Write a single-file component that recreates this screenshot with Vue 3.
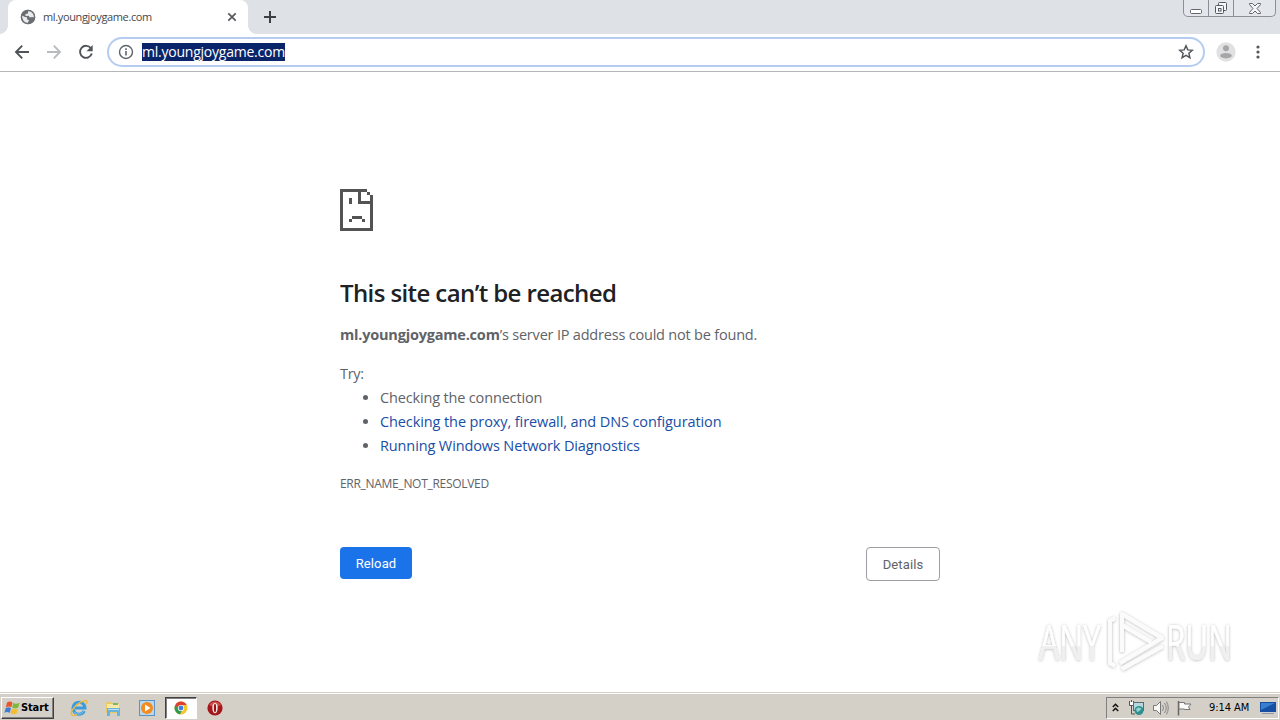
<script setup>
const suggestions = [
  { text: 'Checking the connection', cls: 's1' },
  { text: 'Checking the proxy, firewall, and DNS configuration', cls: 's2 link' },
  { text: 'Running Windows Network Diagnostics', cls: 's3 link' },
]
</script>

<template>
  <div class="screen">
    <header class="tabstrip">
      <div class="tab">
        <svg class="globe" width="16" height="16" viewBox="0 0 16 16">
          <circle cx="8" cy="8" r="7.2" fill="#6b6e72" />
          <path d="M2 6.500 5 8l2 .3v2l2 1-1.500 3C4 14 1.700 10.500 2 6.500ZM8 2.200l3-.2 3 3.500.3 3-2.300-.5-2 .6-1.500-1.800-3 .2L5.500 5 8 4.600Z" fill="#e9eaeb" />
          <circle cx="8" cy="8" r="6.600" fill="none" stroke="#6b6e72" stroke-width="1.400" />
        </svg>
        <span class="tab-title">ml.youngjoygame.com</span>
        <svg class="tab-close" width="10" height="10" viewBox="0 0 10 10"><path d="m1.300 1.300 7.400 7.400m0-7.400L1.300 8.700" stroke="#55585c" stroke-width="1.700" /></svg>
      </div>
      <svg class="plus" width="14" height="14" viewBox="0 0 14 14"><path d="M7 1v12M1 7h12" stroke="#3c4043" stroke-width="2" /></svg>
      <div class="window-buttons">
        <span class="wb"><svg width="14" height="14" viewBox="0 0 14 14"><rect x="1.500" y="8.500" width="11" height="4" rx="1" fill="#fff" stroke="#62666d" /></svg></span>
        <span class="wb mid"><svg width="14" height="14" viewBox="0 0 14 14"><rect x="4.500" y="1.500" width="8" height="8" rx="1" fill="#f5f6f8" stroke="#555960" /><rect x="1.500" y="4.500" width="8" height="8" rx="1" fill="#f5f6f8" stroke="#555960" /><rect x="4.500" y="7.500" width="2.500" height="2.500" fill="#fff" stroke="#555960" /></svg></span>
        <span class="wb last"><svg width="14" height="14" viewBox="0 0 14 14"><path d="M1.500 2.500h3L7 5l2.500-2.500h3v1L9 7.500l3.500 4v1h-3L7 10l-2.500 2.500h-3v-1l3.500-4-3.500-4Z" fill="#f5f6f8" stroke="#62666d" /></svg></span>
      </div>
    </header>

    <div class="toolbar">
      <svg class="nav" width="16" height="16" viewBox="0 0 16 16"><path d="M15 8H2.500M8.200 1.700 2 8l6.200 6.300" fill="none" stroke="#505357" stroke-width="1.900" /></svg>
      <svg class="nav" width="16" height="16" viewBox="0 0 16 16"><path d="M1 8h12.500M7.800 1.700 14 8l-6.200 6.300" fill="none" stroke="#b9bbbe" stroke-width="1.900" /></svg>
      <svg class="nav" width="16" height="16" viewBox="0 0 16 16"><path d="M12.900 4.300A6 6 0 1 0 13.800 9.500" fill="none" stroke="#505357" stroke-width="1.900" /><path d="M14.700 1v6.200H8.500Z" fill="#505357" /></svg>
      <div class="omnibox">
        <svg class="info" width="16" height="16" viewBox="0 0 16 16"><circle cx="8" cy="8" r="6.500" fill="none" stroke="#5f6368" stroke-width="1.400" /><path d="M8 7v4.600M8 4.300V6" stroke="#5f6368" stroke-width="1.600" /></svg>
        <span class="url">ml.youngjoygame.com</span>
        <svg class="star" width="16" height="16" viewBox="0 0 16 16"><path d="m8 1.800 1.800 4.100 4.500.4-3.400 3 1 4.400L8 11.400l-3.900 2.300 1-4.400-3.400-3 4.500-.4Z" fill="none" stroke="#53575b" stroke-width="1.500" /></svg>
      </div>
      <svg class="avatar" width="20" height="20" viewBox="0 0 20 20"><circle cx="10" cy="10" r="9.700" fill="#e1e1e2" /><circle cx="10" cy="6.200" r="3" fill="#a5a6a8" /><ellipse cx="10" cy="13.700" rx="5.800" ry="2.700" fill="#a5a6a8" /></svg>
      <svg class="dots" width="4" height="16" viewBox="0 0 4 16"><g fill="#55585c"><circle cx="2" cy="3" r="1.600" /><circle cx="2" cy="8" r="1.600" /><circle cx="2" cy="13" r="1.600" /></g></svg>
    </div>

    <main class="page">
      <div class="error">
        <svg class="sad" width="33" height="42" viewBox="0 0 33 42" shape-rendering="crispEdges">
          <path fill="#535353" d="M0 0h27v3h-6v9h12v30H0V0Zm3 3v36h27V15H18V3H3Zm24 0h3v3h-3V3Zm3 3h3v6h-3V6ZM9 9h3v6H9V9Zm3 18h10v3H12v-3Zm-3 3h3v3H9v-3Zm13 0h3v3h-3v-3Z" />
        </svg>
        <h1><span>This site can’t be reached</span></h1>
        <p class="summary"><strong>ml.youngjoygame.com</strong><span>’s server IP address could not be found.</span></p>
        <p class="try">Try:</p>
        <ul>
          <li v-for="s in suggestions" :key="s.text"><span :class="s.cls">{{ s.text }}</span></li>
        </ul>
        <p class="code">ERR_NAME_NOT_RESOLVED</p>
        <div class="actions">
          <button class="reload">Reload</button>
          <button class="details">Details</button>
        </div>
      </div>
      <svg class="watermark" width="240" height="84" viewBox="0 0 240 84">
        <defs>
          <linearGradient id="wm" x1="0" y1="0" x2="0" y2="1"><stop offset=".58" stop-color="#fff" /><stop offset=".58" stop-color="#f0f0f0" /></linearGradient>
          <filter id="sh" x="-10%" y="-10%" width="120%" height="120%"><feDropShadow dx="0" dy="0.500" stdDeviation="1.800" flood-color="#000" flood-opacity=".3" /></filter>
        </defs>
        <g filter="url(#sh)">
          <text transform="translate(9 56) scale(.65 1)" class="wm-text">ANY</text>
          <text transform="translate(136 56) scale(.64 1)" class="wm-text">RUN</text>
          <path d="M92 48V10l40 24-42 25M85 14l-5 3v42l5 3M92 65l41-23M92 21l29 17" fill="none" stroke="#fbfbfb" stroke-width="4" stroke-linejoin="round" />
        </g>
      </svg>
    </main>

    <footer class="taskbar">
      <div class="start">
        <svg width="17" height="16" viewBox="0 0 17 16"><path d="M3 2.500Q6 .5 8.500 2.500L7.300 7.300Q4.500 5.500 1.800 7.300Z" fill="#e8572a" /><path d="M9.300 2.900Q12 4.500 15.500 2.700L14.200 7.500Q11 9.300 8.100 7.600Z" fill="#7fb83c" /><path d="M1.600 8.200Q4.300 6.500 7 8.200L5.700 13Q3 11.200.4 13Z" fill="#3f7fd1" /><path d="M7.900 8.500Q10.800 10.200 14 8.500L12.700 13.300Q9.500 15 6.600 13.300Z" fill="#f5bd2d" /></svg>
        <span>Start</span>
      </div>
      <div class="slot">
        <svg width="18" height="18" viewBox="0 0 18 18"><path d="M14.300 12A6 6 0 1 1 15 9H5" fill="none" stroke="#3c9bdc" stroke-width="3" /><path d="M13.800 11.700A5.800 5.800 0 0 1 4 13" fill="none" stroke="#7cc7ef" stroke-width="1" /><path d="M2 16C-1 14 5 6 11 3s7-1 5 2M2 16c1 1 3 .5 5-.7" fill="none" stroke="#e8ba3e" stroke-width="1.500" /></svg>
      </div>
      <div class="slot">
        <svg width="18" height="18" viewBox="0 0 18 18"><path d="M2 3h5l1 1h7v10H2Z" fill="#e9ca62" /><path d="M3 5h12v8H3Z" fill="#fae9a2" /><path d="M9 4h5v2H9Z" fill="#73b77d" /><path d="M3 9h13v8h-3v-4H6v4H3Z" fill="#69b3de" /><path d="M4 10h11v1H4Z" fill="#b5e0f4" /></svg>
      </div>
      <div class="slot">
        <svg width="18" height="18" viewBox="0 0 18 18"><rect x="1.500" y="1.500" width="15" height="15" fill="#b9d8ef" stroke="#5b93c5" /><circle cx="9" cy="9" r="6" fill="#f38b1e" /><path d="M7 5.500 12.500 9 7 12.500Z" fill="#fff" /></svg>
      </div>
      <div class="slot active">
        <svg width="14" height="14" viewBox="0 0 14 14"><circle cx="7" cy="7" r="6.500" fill="#f6c52d" /><path d="M1.400 3.700A6.500 6.500 0 0 1 12.700 4H7L4.200 8.400Z" fill="#df4032" /><path d="M1.400 3.700 4.300 8.500 7.500 10 6 13.400A6.500 6.500 0 0 1 1.400 3.700Z" fill="#329a51" /><circle cx="7" cy="7" r="3.100" fill="#fff" /><circle cx="7" cy="7" r="2.400" fill="#427fdc" /></svg>
      </div>
      <div class="slot">
        <svg width="16" height="16" viewBox="0 0 16 16"><circle cx="8" cy="8" r="7.600" fill="#a61519" /><path d="M2 5a7 7 0 0 1 12 0Q8 9 2 5Z" fill="#cc4b48" /><ellipse cx="8" cy="8" rx="2.700" ry="5.300" fill="#f7e9e8" /><ellipse cx="8" cy="8" rx="1.100" ry="4.300" fill="#961014" /></svg>
      </div>
      <div class="tray">
        <svg class="chev" width="7" height="9" viewBox="0 0 7 9"><path d="M.8 4 3.500 1.300 6.200 4M.8 8 3.500 5.300 6.200 8" fill="none" stroke="#111" stroke-width="1.500" /></svg>
        <svg class="net" width="17" height="16" viewBox="0 0 17 16"><path d="M1.500 1v4.500h4V1M3.500 0v3M3.500 6v8H7" fill="none" stroke="#555" /><path d="M2 2h3v3H2Z" fill="#fff" /><rect x="5.500" y="2.500" width="10" height="8" fill="#b6d8df" stroke="#5c6a70" /><circle cx="11" cy="10.500" r="4.500" fill="#318f91" /><path d="M8 9c3-3 5-1 5 0s-3 3-4 3Z" fill="#8ed4cc" /></svg>
        <svg class="vol" width="17" height="16" viewBox="0 0 17 16"><path d="M1.500 5.500h3L8.500 1.500v13l-4-4h-3Z" fill="#f7f7f5" stroke="#777" /><path d="M10.500 5q2 3 0 6M12.500 3q3.500 5 0 10M14.500 1.500q3.500 6.500 0 13" fill="none" stroke="#888" /></svg>
        <svg class="flag" width="17" height="16" viewBox="0 0 17 16"><path d="M2.500 1v14.500" stroke="#666" stroke-width="1.500" /><path d="M3 2.500h5.500v1.500h6.500l-2.500 3 1.500 2.500H8.500V9H3Z" fill="#fafaf8" stroke="#777" /></svg>
        <span class="clock">9:14 AM</span>
        <svg class="desk" width="16" height="14" viewBox="0 0 16 14"><path d="M0 1h16v10H0Z" fill="#174fa4" /><path d="M1 2h14L1 9Z" fill="#397fd0" /><path d="M2 12h12v1H2Z" fill="#8b9ab0" /></svg>
      </div>
    </footer>
  </div>
</template>

<style>
body { margin: 0; overflow: hidden; }
</style>

<style scoped>
.screen { width: 1280px; height: 720px; display: flex; flex-direction: column; background: #fff; font-family: "Open Sans", "Noto Sans", sans-serif; color: #5f6368; overflow: hidden; }
.screen * { box-sizing: border-box; }
svg { display: block; flex: none; }
.tabstrip { height: 34px; flex: none; display: flex; background: #dee1e6; padding-left: 8px; }
.tab { position: relative; width: 240px; height: 34px; background: #fff; border-radius: 8px 8px 0 0; display: flex; align-items: center; padding: 0 11px 0 12px; }
.tab::before, .tab::after { content: ""; position: absolute; bottom: 0; width: 8px; height: 8px; }
.tab::before { left: -8px; background: radial-gradient(circle at 0 0, transparent 7.500px, #fff 8px); }
.tab::after { right: -8px; background: radial-gradient(circle at 100% 0, transparent 7.500px, #fff 8px); }
.tab-title { margin-left: 7px; font-size: 11px; line-height: 16px; color: #45484c; letter-spacing: -0.360px; white-space: nowrap; }
.tab-close { margin-left: auto; }
.plus { margin: 10px 0 0 15px; }
.window-buttons { margin-left: auto; margin-right: 4px; width: 93px; height: 17px; display: flex; border: 1px solid #8b8f98; border-top: 0; border-radius: 0 0 5px 5px; overflow: hidden; background: #e3e6ea; }
.wb { width: 24px; display: flex; justify-content: center; padding-top: 1px; }
.wb.mid { width: 26px; border: solid #8b8f98; border-width: 0 1px; }
.wb.last { width: 41px; }
.toolbar { height: 38px; flex: none; display: flex; align-items: center; border-bottom: 1px solid #b5b6b8; padding: 0 20px 2px 14px; }
.nav { margin-right: 16px; }
.omnibox { width: 1098px; height: 30px; margin-left: -3px; margin-top: 1px; border: 2px solid #b5ccf0; border-radius: 15px; display: flex; align-items: center; padding: 0 9px; }
.url { margin-left: 8px; background: #0a246a; color: #fff; font-size: 14px; line-height: 18px; height: 18px; width: 143px; letter-spacing: -0.230px; white-space: nowrap; }
.star { margin-left: auto; }
.avatar { margin-left: 11px; }
.dots { margin-left: 20px; }
.page { position: relative; flex: 1; background: #fff; }
.error { width: 600px; margin: 0 auto; padding-top: 117px; font-size: 14.500px; line-height: 24px; white-space: nowrap; }
h1 { margin: 47px 0 0; font-size: 24px; line-height: 29px; font-weight: 600; color: #202124; letter-spacing: -0.600px; }
p { margin: 0; }
.summary { margin-top: 16px; letter-spacing: -0.200px; }
.summary strong { letter-spacing: -0.200px; }
.try { margin-top: 15px; letter-spacing: -0.300px; }
ul { margin: 0; padding-left: 40px; list-style: disc; }
.s1 { letter-spacing: -0.160px; }
.s2 { letter-spacing: -0.100px; }
.s3 { letter-spacing: -0.120px; }
.link { color: #174ea6; }
.code { margin-top: 14px; font-size: 12px; letter-spacing: -0.300px; }
.actions { margin-top: 51px; display: flex; justify-content: space-between; }
button { font-family: Roboto, sans-serif; font-size: 13px; font-weight: 400; padding: 0; border-radius: 4px; letter-spacing: 0.120px; }
.reload { width: 72px; height: 32px; border: 0; background: #1a73e8; color: #fff; }
.details { width: 74px; height: 34px; border: 1px solid #9b9ea2; background: #fff; color: #5f6368; }
.watermark { position: absolute; left: 1030px; top: 532px; }
.wm-text { font-family: "Open Sans", sans-serif; font-size: 49px; font-weight: 400; fill: url(#wm); }
.taskbar { height: 28px; flex: none; display: flex; align-items: center; background: #d4d0c8; border-top: 1px solid #d4d0c8; box-shadow: inset 0 1px #fff; padding: 2px 1px 0 1px; }
.start { width: 53px; height: 22px; margin-right: 9px; display: flex; align-items: center; padding: 0 2px; border: 1px solid; border-color: #fff #404040 #404040 #fff; box-shadow: inset -1px -1px #808080; color: #000; }
.start span { font: bold 11px/16px "DejaVu Sans Condensed", "DejaVu Sans", sans-serif; font-stretch: condensed; letter-spacing: -0.120px; }
.slot { width: 32px; height: 22px; margin-right: 2px; display: flex; align-items: center; justify-content: center; }
.slot.active { background: #fff; border: 1px solid; border-color: #404040 #fff #fff #404040; box-shadow: inset 1px 1px #808080; }
.tray { margin-left: auto; width: 173px; height: 22px; border: 1px solid; border-color: #808080 #fff #fff #808080; display: flex; align-items: center; padding: 0 2px 0 5px; color: #000; }
.net { margin-left: 9px; }
.vol { margin-left: 7px; }
.flag { margin-left: 7px; }
.clock { margin-left: 16px; font: 11px/16px "DejaVu Sans Condensed", "DejaVu Sans", sans-serif; font-stretch: condensed; letter-spacing: -0.050px; white-space: nowrap; }
.desk { margin-left: auto; }
</style>
